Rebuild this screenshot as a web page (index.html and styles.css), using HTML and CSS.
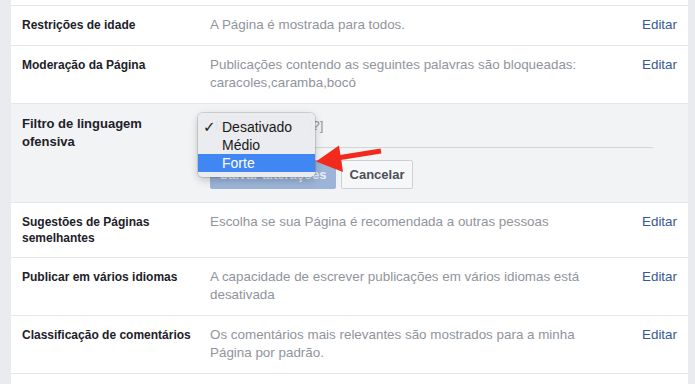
FILE: index.html
```html
<!DOCTYPE html>
<html lang="pt">
<head>
<meta charset="utf-8">
<title>Configurações da Página</title>
<link rel="stylesheet" href="styles.css">
</head>
<body>
<div class="panel">
  <div class="row row-top"></div>
  <div class="row">
    <div class="label">Restrições de idade</div>
    <div class="desc">A Página é mostrada para todos.</div>
    <a class="edit" href="#">Editar</a>
  </div>
  <div class="row">
    <div class="label">Moderação da Página</div>
    <div class="desc">Publicações contendo as seguintes palavras são bloqueadas: caracoles,caramba,bocó</div>
    <a class="edit" href="#">Editar</a>
  </div>
  <div class="row row-active">
    <div class="label label-active">Filtro de linguagem ofensiva</div>
    <div class="editor">
      <div class="select-line">
        <span class="select-box">Desativado</span>
        <span class="help">[?]</span>
      </div>
      <div class="divider"></div>
      <div class="buttons">
        <button class="btn btn-primary">Salvar alterações</button>
        <button class="btn btn-cancel">Cancelar</button>
      </div>
      <ul class="menu">
        <li class="menu-item"><span class="check">✓</span>Desativado</li>
        <li class="menu-item">Médio</li>
        <li class="menu-item selected">Forte</li>
      </ul>
    </div>
  </div>
  <div class="row">
    <div class="label">Sugestões de Páginas semelhantes</div>
    <div class="desc">Escolha se sua Página é recomendada a outras pessoas</div>
    <a class="edit" href="#">Editar</a>
  </div>
  <div class="row">
    <div class="label">Publicar em vários idiomas</div>
    <div class="desc">A capacidade de escrever publicações em vários idiomas está desativada</div>
    <a class="edit" href="#">Editar</a>
  </div>
  <div class="row">
    <div class="label">Classificação de comentários</div>
    <div class="desc">Os comentários mais relevantes são mostrados para a minha Página por padrão.</div>
    <a class="edit" href="#">Editar</a>
  </div>
</div>
<svg class="arrow" viewBox="0 0 695 384" width="695" height="384" aria-hidden="true">
  <line x1="381" y1="151" x2="334" y2="158.5" stroke="#f2291d" stroke-width="5" stroke-linecap="butt"/>
  <polygon points="316,161.5 339,145.5 343,172" fill="#f2291d"/>
</svg>
</body>
</html>
```
FILE: styles.css
```css
html, body {
  margin: 0;
  padding: 0;
}
body {
  background: #e9ebee;
  font-family: "Liberation Sans", Arial, sans-serif;
  height: 384px;
  overflow: hidden;
  position: relative;
}
.panel {
  margin-left: 11px;
  width: 677px;
  min-height: 384px;
  background: #ffffff;
}
.row {
  display: grid;
  grid-template-columns: 188px 400px 1fr;
  align-items: start;
  padding: 10px 11px 11px 11px;
  border-bottom: 1px solid #e5e6e9;
}
.row-top {
  display: block;
  height: 5px;
  padding: 0;
}
.label {
  padding-top: 1px;
  font-size: 12px;
  font-weight: bold;
  line-height: 16px;
  color: #1d2129;
  padding-right: 16px;
}
.desc {
  font-size: 13.4px;
  line-height: 18px;
  color: #90949c;
}
.edit {
  justify-self: end;
  font-size: 13.4px;
  line-height: 18px;
  color: #365899;
  text-decoration: none;
}
.row-active {
  background: #f2f3f5;
  padding-top: 11px;
  padding-bottom: 13px;
}
.label-active {
  padding-top: 0;
  font-size: 13px;
  line-height: 18px;
  padding-right: 38px;
}
.editor {
  grid-column: 2 / 4;
  margin-right: 24px;
  position: relative;
}
.select-line {
  display: flex;
  align-items: center;
  gap: 5px;
  height: 21px;
}
.select-box {
  display: inline-block;
  width: 94px;
  height: 19px;
  border: 1px solid #ccd0d5;
  background: #f6f7f9;
  font-size: 12px;
  line-height: 19px;
  padding-left: 4px;
  box-sizing: border-box;
  color: #1d2129;
}
.help {
  font-size: 13px;
  color: #90949c;
}
.divider {
  height: 1px;
  background: #d3d5d9;
  margin-top: 11px;
}
.buttons {
  display: flex;
  gap: 5px;
  margin-top: 12px;
}
.btn {
  height: 29px;
  border-radius: 2px;
  font-family: "Liberation Sans", Arial, sans-serif;
  font-size: 13px;
  font-weight: bold;
  padding: 0 7px;
  box-sizing: border-box;
  margin: 0;
}
.btn-primary {
  width: 126px;
  background: #9cb4d8;
  border: 1px solid #9cb4d8;
  color: #e9eef6;
}
.btn-cancel {
  width: 72px;
  background: #f6f7f9;
  border: 1px solid #ced0d4;
  color: #4b4f56;
}
.menu {
  position: absolute;
  left: -12px;
  top: -2px;
  width: 117px;
  margin: 0;
  padding: 5px 0 5px 0;
  list-style: none;
  background: rgba(233, 235, 238, 0.97);
  border-radius: 5px;
  box-shadow: 0 0 0 1px rgba(0, 0, 0, 0.12), 0 3px 9px rgba(0, 0, 0, 0.22);
  box-sizing: border-box;
}
.menu-item {
  position: relative;
  height: 18px;
  line-height: 18px;
  padding-left: 24px;
  font-size: 14px;
  color: #1a1a1a;
}
.menu-item.selected {
  background: #4087f3;
  color: #ffffff;
}
.check {
  position: absolute;
  left: 5px;
  top: 0;
  font-family: "DejaVu Sans", sans-serif;
  font-size: 15px;
  font-weight: bold;
}
.arrow {
  position: absolute;
  left: 0;
  top: 0;
  pointer-events: none;
}
```
